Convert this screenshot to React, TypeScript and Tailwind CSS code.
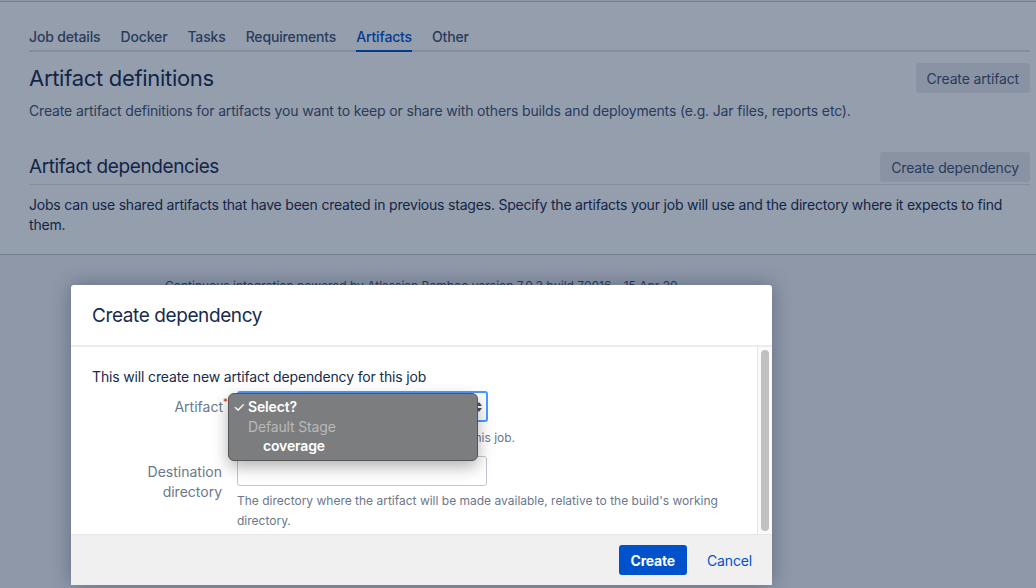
const tabs = ["Job details", "Docker", "Tasks", "Requirements", "Artifacts", "Other"];

const App = () => {
  return (
    <div
      className="relative h-[588px] w-[1036px] overflow-hidden bg-[#f4f5f7] text-[#172b4d]"
      style={{ fontFamily: "Inter, 'Noto Sans', sans-serif" }}
    >
      {/* Page content */}
      <div className="mt-px border-t border-b border-[#c1c7d0] bg-white pl-[29px] pr-[6px] pb-[19px]">
        <ul className="mt-[25px] flex gap-5 border-b-2 border-[#dfe1e6] text-[14px] font-medium leading-5 tracking-[-0.15px]">
          {tabs.map((t) => (
            <li
              key={t}
              className={
                t === "Artifacts"
                  ? "-mb-[2px] border-b-2 border-[#0052cc] pb-[3px] text-[#0052cc]"
                  : "-mb-[2px] border-b-2 border-transparent pb-[3px] text-[#42526e]"
              }
            >
              {t}
            </li>
          ))}
        </ul>

        <div className="mt-[11px] flex items-center justify-between">
          <h2 className="text-[22px] leading-[30px] tracking-[-0.3px]">Artifact definitions</h2>
          <button className="h-[30px] rounded-[3px] bg-[#ebecf0] px-[11px] text-[14px] tracking-[-0.15px] text-[#42526e]">
            Create artifact
          </button>
        </div>
        <p className="mt-2 text-[14px] leading-5 tracking-[-0.15px] text-[#42526e]">
          Create artifact definitions for artifacts you want to keep or share with others builds and deployments (e.g. Jar files, reports etc).
        </p>

        <div className="mt-[31px] flex items-center justify-between border-b border-[#dfe1e6] pb-[2px]">
          <h2 className="text-[19px] leading-[30px] tracking-[-0.4px]">Artifact dependencies</h2>
          <button className="h-[30px] rounded-[3px] bg-[#ebecf0] px-[11px] text-[14px] tracking-[-0.15px] text-[#42526e]">
            Create dependency
          </button>
        </div>
        <p className="mt-[10px] text-[14px] leading-5 tracking-[-0.2px] text-[#172b4d]">
          Jobs can use shared artifacts that have been created in previous stages. Specify the artifacts your job will use and the directory where it expects to find them.
        </p>
      </div>

      {/* Footer */}
      <div className="pl-[165px] pt-[23px] text-[12px] leading-4 text-[#42526e]">
        Continuous integration powered by Atlassian Bamboo version 7.0.3 build 70016 - 15 Apr 20
      </div>

      {/* Blanket */}
      <div className="absolute inset-0 bg-[rgba(9,30,66,0.43)]" />

      {/* Dialog */}
      <div className="absolute left-[71px] top-[285px] flex h-[300px] w-[701px] flex-col rounded-[3px] bg-white shadow-[0_0_20px_rgba(9,30,66,0.35)]">
        <div className="h-[62px] border-b-2 border-[#ebecf0] px-[21px] pt-[19px]">
          <h3 className="text-[19px] leading-6 tracking-[-0.4px] text-[#172b4d]">Create dependency</h3>
        </div>

        <div className="flex flex-1">
          <div className="flex-1 pl-[21px] pt-[20px]">
            <p className="text-[14px] leading-5 tracking-[-0.15px] text-[#172b4d]">
              This will create new artifact dependency for this job
            </p>

            <div className="mt-[4px] flex">
              <label className="w-[145px] pr-[9px] pt-[6px] text-right text-[14px] leading-5 text-[#6b778c]">
                Artifact<span className="relative -top-[6px] text-[10px] text-[#de350b]">*</span>
              </label>
              <div>
                <div className="flex h-[31px] w-[251px] items-center justify-end rounded-[3px] border-2 border-[#4c9aff] pr-[3px]">
                  <svg width="8" height="12" viewBox="0 0 8 12">
                    <path d="M4 1 L7 5 H1 Z M4 11 L7 7 H1 Z" fill="#42526e" />
                  </svg>
                </div>
                <p className="mt-[8px] text-[12px] leading-4 text-[#6b778c]">
                  The artifact will be made available within this job.
                </p>
              </div>
            </div>

            <div className="mt-[10px] flex">
              <label className="w-[145px] pr-[15px] pt-[6px] text-right text-[14px] leading-5 text-[#6b778c]">
                Destination directory
              </label>
              <div className="flex-1">
                <div className="h-[30px] w-[250px] rounded-[3px] border border-[#c1c7d0] bg-white" />
                <p className="mt-[5px] pr-[20px] text-[12px] leading-5 text-[#6b778c]">
                  The directory where the artifact will be made available, relative to the build's working directory.
                </p>
              </div>
            </div>
          </div>

          <div className="w-[15px] border-l border-[#e6e6e6] bg-[#fafafa] px-[3px] py-[3px]">
            <div className="h-full w-[8px] rounded-full bg-[#c1c1c1]" />
          </div>
        </div>

        <div className="flex h-[51px] items-center justify-end gap-[10px] border-t border-[#e6e6e6] bg-[#f0f0f0] pr-[10px]">
          <button className="h-[30px] rounded-[3px] bg-[#0052cc] px-[12px] text-[14px] font-bold tracking-[-0.2px] text-white">
            Create
          </button>
          <button className="h-[30px] px-[10px] text-[14px] tracking-[-0.15px] text-[#0052cc]">Cancel</button>
        </div>

        {/* Native select popup */}
        <div className="absolute left-[157px] top-[108px] h-[68px] w-[250px] rounded-[6px] border border-[#555] bg-[#7c7d7f] pt-[3px] text-[14px] leading-[19.5px] tracking-[-0.15px] shadow-[0_6px_16px_rgba(0,0,0,0.3)]">
          <div className="flex font-semibold text-white">
            <span className="w-[19px] pl-[4px] font-normal">✓</span>
            <span>Select?</span>
          </div>
          <div className="pl-[19px] text-[#b8b9bb]">Default Stage</div>
          <div className="pl-[34px] font-semibold text-white">coverage</div>
        </div>
      </div>
    </div>
  );
};

export default App;
